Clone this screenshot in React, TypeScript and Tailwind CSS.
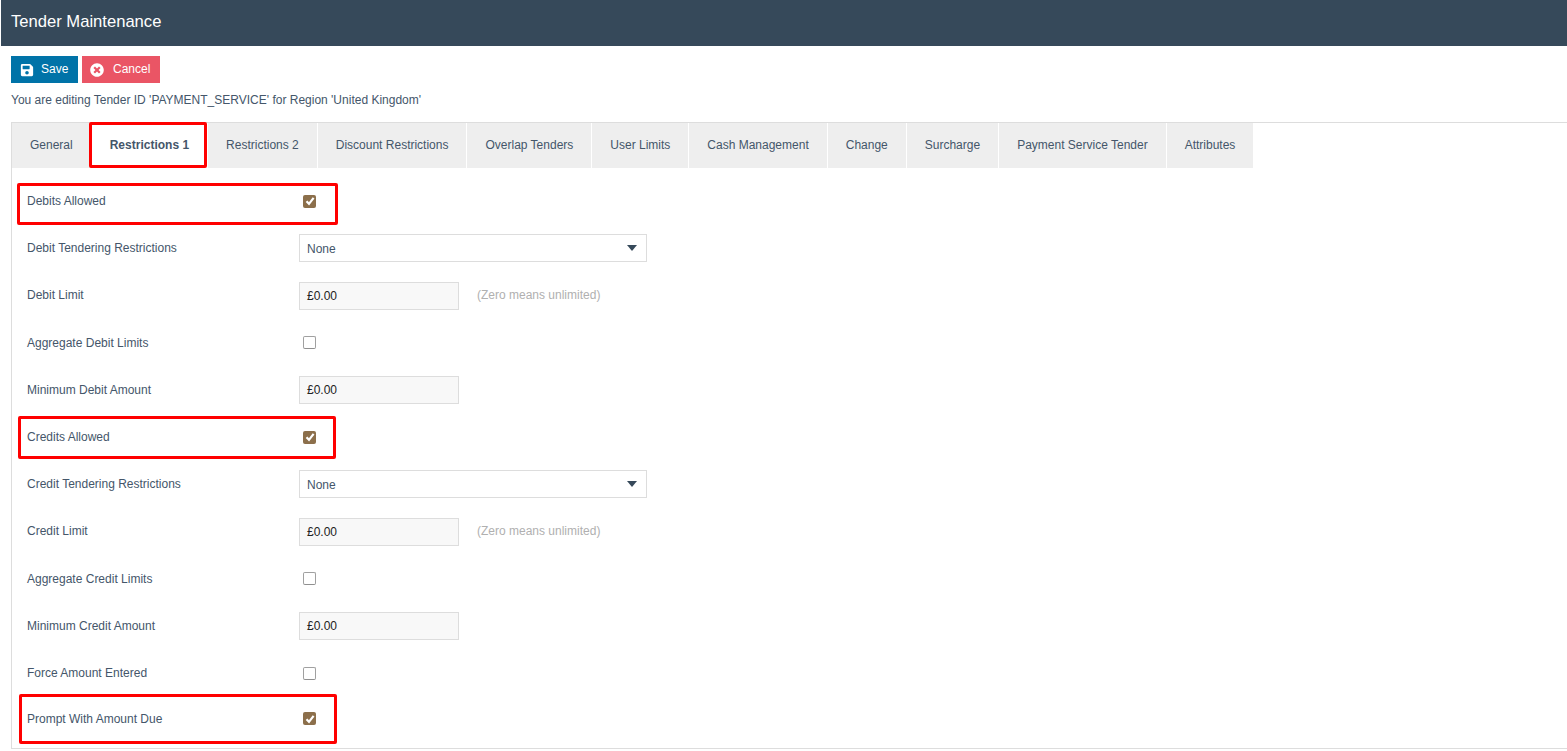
import React from 'react';
import { FaSave, FaTimesCircle } from 'react-icons/fa';

const TABS = [
  'General',
  'Restrictions 1',
  'Restrictions 2',
  'Discount Restrictions',
  'Overlap Tenders',
  'User Limits',
  'Cash Management',
  'Change',
  'Surcharge',
  'Payment Service Tender',
  'Attributes',
];

const Check = ({ checked }: { checked?: boolean }) =>
  checked ? (
    <span className="flex items-center justify-center w-[13px] h-[13px] rounded-[2px] bg-[#8c6f4b]">
      <svg width="10" height="10" viewBox="0 0 10 10">
        <path d="M1.5 5.2 L4 7.8 L8.6 1.8" fill="none" stroke="#fff" strokeWidth="2.2" />
      </svg>
    </span>
  ) : (
    <span className="block w-[13px] h-[13px] rounded-[2px] border border-[#a0a0a0] border-b-[#909090] bg-white" />
  );

const Money = () => (
  <div className="w-[160px] h-[28px] flex items-center px-[7px] bg-[#f8f8f8] border border-[#dddddd] text-[12px] text-[#222]">
    £0.00
  </div>
);

const Select = () => (
  <div className="w-[348px] h-[28px] flex items-center justify-between pl-[7px] pr-[9px] bg-white border border-[#dddddd] text-[12px] text-[#44566a]">
    <span className="mt-[1px]">None</span>
    <svg width="10" height="6" viewBox="0 0 10 6">
      <path d="M0 0 H10 L5 6 Z" fill="#36495a" />
    </svg>
  </div>
);

const Row = ({
  label,
  children,
  hint,
  last,
}: {
  label: string;
  children: React.ReactNode;
  hint?: boolean;
  last?: boolean;
}) => (
  <div className={last ? 'relative flex items-center h-[47.2px] -mt-[1.5px]' : 'relative flex items-center h-[47.2px]'}>
    <div className={last ? 'w-[287px] pl-[15px] text-[12px] text-[#44566a]' : 'w-[287px] pl-[15px] -mt-[0.2px] text-[12px] text-[#44566a]'}>
      {label}
    </div>
    <div>{children}</div>
    {hint && (
      <span className="ml-[18px] -mt-[2px] text-[12px] text-[#b0b0b0]">
        (Zero means unlimited)
      </span>
    )}
  </div>
);

const Box = ({ checked }: { checked?: boolean }) => (
  <div className="ml-[4px]">
    <Check checked={checked} />
  </div>
);

export default function App() {
  return (
    <div className="h-[751px] w-[1567px] overflow-hidden bg-white font-['Liberation_Sans',Arial,sans-serif]">
      <div className="ml-[1px] h-[46px] flex items-center pl-[10px] pb-[2px] bg-[#36495a] text-white text-[16.6px]">
        Tender Maintenance
      </div>

      <div className="flex gap-[4px] pl-[11px] pt-[10px]">
        <button className="flex items-center gap-[7px] h-[27px] pl-[9px] pb-[2px] w-[67px] bg-[#0073a8] text-white text-[12px]">
          <FaSave size={14} className="mt-[2px]" />
          Save
        </button>
        <button className="flex items-center gap-[9px] h-[27px] pl-[8px] pb-[2px] w-[78px] bg-[#ea5565] text-white text-[12px]">
          <FaTimesCircle size={14} className="mt-[2px]" />
          Cancel
        </button>
      </div>
      <div className="pl-[11px] mt-[10px] text-[12px] leading-[14px] text-[#44566a]">
        You are editing Tender ID 'PAYMENT_SERVICE' for Region 'United Kingdom'
      </div>

      <div className="ml-[11px] mt-[15px] h-[627px] border-l border-t border-b border-[#dddddd]">
        <div className="relative flex gap-[1px] h-[45px]">
          {TABS.map((t) => (
            <div
              key={t}
              className={
                t === 'Restrictions 1'
                  ? 'flex items-center px-[18px] pb-[2px] bg-white text-[12px] font-bold text-[#44566a]'
                  : 'flex items-center px-[18px] pb-[2px] bg-[#eeeeee] text-[12px] text-[#44566a]'
              }
            >
              {t}
            </div>
          ))}
          <div className="absolute left-[77px] top-[-1px] w-[118px] h-[46px] border-[3px] border-[#ff0000] rounded-[2px]" />
        </div>

        <div className="pt-[9.6px]">
          <Row label="Debits Allowed">
            <Box checked />
            <div className="absolute left-[5px] top-[5px] w-[321px] h-[42px] border-[3px] border-[#ff0000] rounded-[2px]" />
          </Row>
          <Row label="Debit Tendering Restrictions"><Select /></Row>
          <Row label="Debit Limit" hint><Money /></Row>
          <Row label="Aggregate Debit Limits"><Box /></Row>
          <Row label="Minimum Debit Amount"><Money /></Row>
          <Row label="Credits Allowed">
            <Box checked />
            <div className="absolute left-[6px] top-[2px] w-[318px] h-[43px] border-[3px] border-[#ff0000] rounded-[2px]" />
          </Row>
          <Row label="Credit Tendering Restrictions"><Select /></Row>
          <Row label="Credit Limit" hint><Money /></Row>
          <Row label="Aggregate Credit Limits"><Box /></Row>
          <Row label="Minimum Credit Amount"><Money /></Row>
          <Row label="Force Amount Entered"><Box /></Row>
          <Row label="Prompt With Amount Due" last>
            <Box checked />
            <div className="absolute left-[7px] top-[-1px] w-[318px] h-[50px] border-[3px] border-[#ff0000] rounded-[2px]" />
          </Row>
        </div>
      </div>
    </div>
  );
}
